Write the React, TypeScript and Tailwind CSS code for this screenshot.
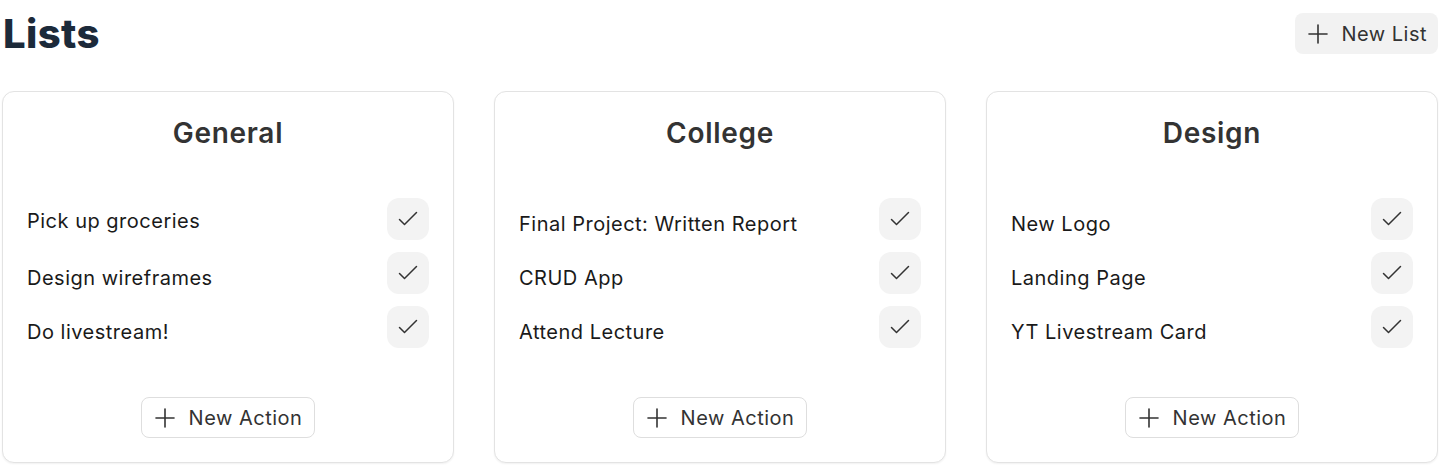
const lists = [
  {
    title: "General",
    items: ["Pick up groceries", "Design wireframes", "Do livestream!"],
    firstUp: true,
  },
  {
    title: "College",
    items: ["Final Project: Written Report", "CRUD App", "Attend Lecture"],
    firstUp: false,
  },
  {
    title: "Design",
    items: ["New Logo", "Landing Page", "YT Livestream Card"],
    firstUp: false,
  },
]

function PlusIcon() {
  return (
    <svg width="20" height="20" viewBox="0 0 20 20" fill="none" stroke="#333" strokeWidth="1.6" strokeLinecap="round">
      <path d="M1 10h18" />
      <path d="M10 1v18" />
    </svg>
  )
}

function CheckIcon() {
  return (
    <svg width="20" height="16" viewBox="0 0 20 16" fill="none" stroke="#333" strokeWidth="1.5" strokeLinecap="round" strokeLinejoin="round">
      <path d="M1.5 8.5l5 5L18.5 1.5" />
    </svg>
  )
}

function ListCard({ title, items, firstUp }: { title: string; items: string[]; firstUp: boolean }) {
  return (
    <div className="border border-[#e3e3e3] rounded-xl bg-white shadow-[0_1px_2px_rgba(0,0,0,0.06)] px-6 pt-[23px] pb-6 flex flex-col">
      {/* card title */}
      <h2 className="text-center text-[28px] leading-9 font-semibold text-[#333] tracking-[0.025em]">{title}</h2>

      {/* actions */}
      <div className="mt-[47px] flex flex-col gap-3">
        {items.map((item, i) => (
          <div key={item} className="flex items-center justify-between h-[42px]">
            <span
              className={
                i === 0 && firstUp
                  ? "text-[20px] leading-7 text-[#1a1a1a] tracking-[0.025em] translate-y-[2px]"
                  : "text-[20px] leading-7 text-[#1a1a1a] tracking-[0.025em] translate-y-[5px]"
              }
            >
              {item}
            </span>
            <button className="w-[42px] h-[42px] rounded-xl bg-[#f3f3f3] flex items-center justify-center">
              <CheckIcon />
            </button>
          </div>
        ))}
      </div>

      {/* new action */}
      <div className="mt-[49px] flex justify-center">
        <button className="h-[41px] flex items-center gap-[14px] pl-[13px] pr-[12px] border border-[#dedede] rounded-lg bg-white text-[20px] text-[#333] tracking-[0.025em]">
          <PlusIcon />
          <span>New Action</span>
        </button>
      </div>
    </div>
  )
}

export default function App() {
  return (
    <div className="w-[1440px] h-[467px] bg-white px-[2px] font-['Inter',sans-serif] overflow-hidden">
      {/* Header */}
      <div className="flex items-center justify-between pt-[13px]">
        <h1 className="text-[40px] leading-[41px] font-extrabold text-[#1c2a3a] tracking-[0.01em] pl-[1px]">Lists</h1>
        <button className="h-[41px] flex items-center gap-[13px] pl-[13px] pr-[11px] rounded-lg bg-[#f2f2f2] text-[20px] text-[#333] tracking-[0.025em]">
          <PlusIcon />
          <span>New List</span>
        </button>
      </div>

      {/* Cards */}
      <div className="grid grid-cols-3 gap-10 mt-[37px]">
        {lists.map((l) => (
          <ListCard key={l.title} title={l.title} items={l.items} firstUp={l.firstUp} />
        ))}
      </div>
    </div>
  )
}
